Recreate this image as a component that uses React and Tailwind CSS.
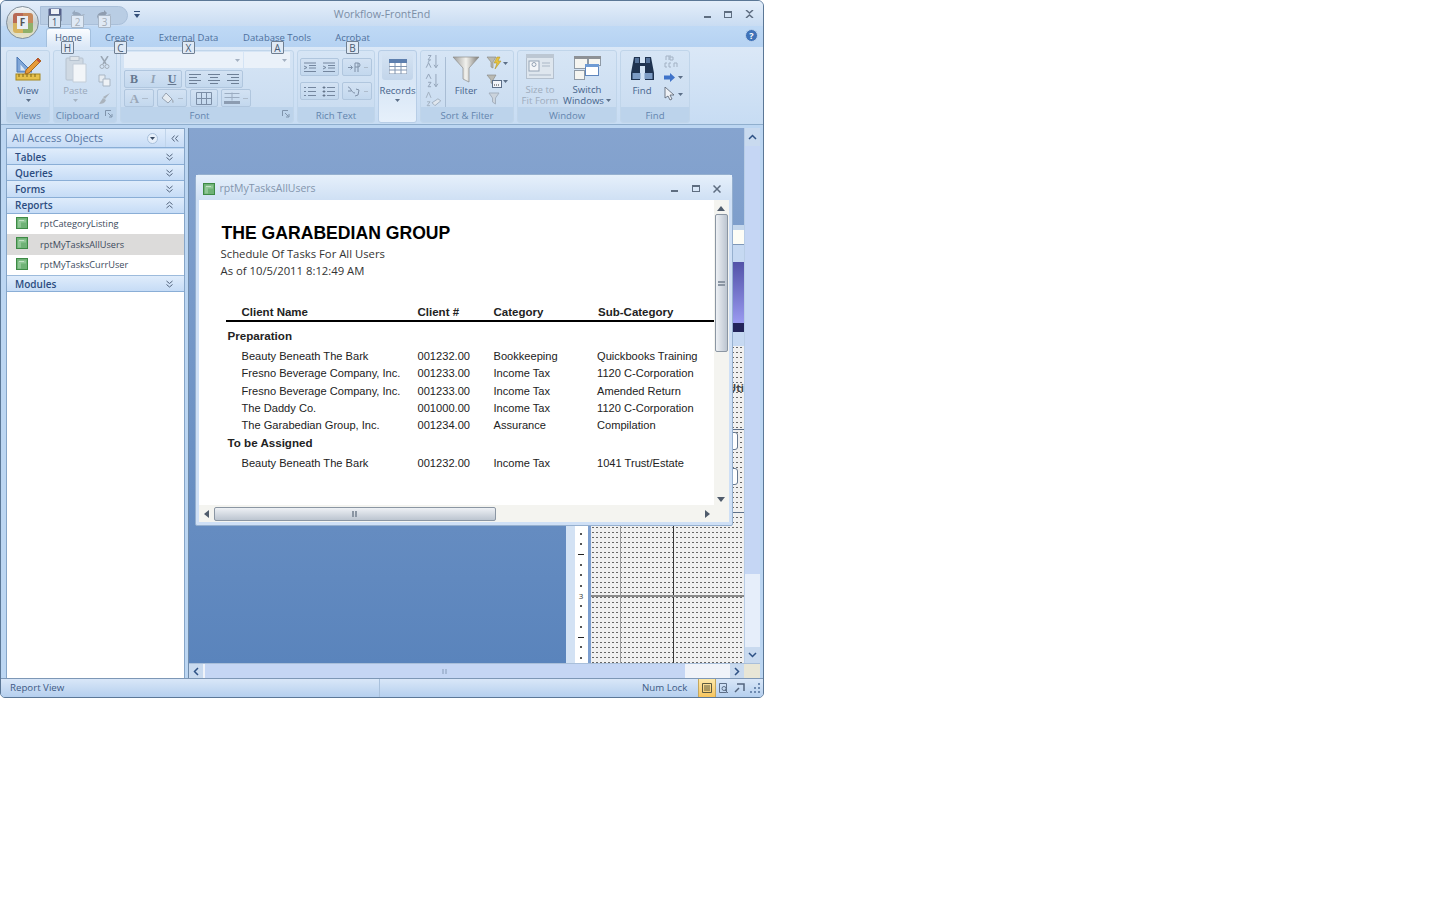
import React from "react";

const Caret = ({ c = "#5c6f88" }) => (
  <svg width="5" height="3" viewBox="0 0 5 3" className="shrink-0"><path d="M0 0h5L2.5 3z" fill={c} /></svg>
);

const KeyTip = ({ x, y, t, dim }) => (
  <div className={`absolute z-20 w-[13px] h-[13px] flex items-center justify-center rounded-[1px] border text-[10px] leading-none bg-[#dfe9f5] ${dim ? "border-[#a9b7c7] text-[#a4adb8]" : "border-[#6f7f92] text-[#4a5b72]"}`} style={{ left: x, top: y }}>{t}</div>
);

const Group = ({ w, label, launcher, children }) => (
  <div className="shrink-0 h-[73px] flex flex-col rounded-[3px] border border-[#c0d5ea] bg-gradient-to-b from-[#d6e5f5] to-[#c8dbf0] overflow-hidden" style={{ width: w }}>
    <div className="flex-1 flex min-h-0">{children}</div>
    <div className={`h-[15px] relative flex items-center justify-center bg-[#bcd3eb] text-[9.600px] text-[#6385ae] leading-none pt-[2px] ${launcher ? "pr-[15px]" : ""}`}>
      {label}
      {launcher && (
        <svg width="8" height="8" viewBox="0 0 8 8" className="absolute right-[3px] top-[3px]"><path d="M.5 6V.5H6M3 3l3.5 3.5M7 4v3H4" fill="none" stroke="#7f93ab" /></svg>
      )}
    </div>
  </div>
);

const Seg = ({ w, children }) => (
  <div className="h-[18px] flex items-center justify-center gap-[3px] rounded-[2px] border border-[#b0c6de] bg-gradient-to-b from-[#d3e2f3] to-[#c3d8ee]" style={{ width: w }}>{children}</div>
);

const ReportIcon = ({ size = 12 }) => (
  <svg width={size} height={size} viewBox="0 0 12 12" className="shrink-0">
    <rect width="12" height="12" fill="#3d8a45" />
    <rect x="1" y="1" width="10" height="10" fill="#6fb276" />
    <path d="M3 2.5h7v3H5v5H2v-7z" fill="#8fc795" />
    <rect x="3" y="3" width="5" height="1" fill="#c3e2c6" />
  </svg>
);

const NavHead = ({ t, up }) => (
  <div className="h-[16.200px] shrink-0 flex items-center justify-between pl-[8px] pr-[11px] border-b border-[#8aaed6] bg-gradient-to-b from-[#dfecfb] to-[#c6dcf6] text-[10px] font-semibold text-[#2b4c80] leading-none">
    <span>{t}</span>
    <svg width="7" height="8" viewBox="0 0 7 8" fill="none" stroke="#52637c" strokeWidth="1">
      {up ? <path d="M.5 3.5L3.5 1l3 2.5M.5 7L3.5 4.5l3 2.5" /> : <path d="M.5 1l3 2.5L6.500 1M.5 4.500L3.500 7l3-2.500" />}
    </svg>
  </div>
);

const NavItem = ({ t, sel }) => (
  <div className={`h-[20.500px] shrink-0 flex items-center pl-[9px] text-[9.200px] text-[#3c4a5c] ${sel ? "bg-[#dcdbda]" : ""}`}>
    <div className="mb-[3px]"><ReportIcon /></div>
    <span className="ml-[12px]">{t}</span>
  </div>
);

const rows = [
  ["Beauty Beneath The Bark", "001232.00", "Bookkeeping", "Quickbooks Training"],
  ["Fresno Beverage Company, Inc.", "001233.00", "Income Tax", "1120 C-Corporation"],
  ["Fresno Beverage Company, Inc.", "001233.00", "Income Tax", "Amended Return"],
  ["The Daddy Co.", "001000.00", "Income Tax", "1120 C-Corporation"],
  ["The Garabedian Group, Inc.", "001234.00", "Assurance", "Compilation"],
];

const Row = ({ r, cls }) => (
  <div className={`flex text-[11.100px] leading-none text-[#222] pl-[43px] ${cls}`}>
    <span className="w-[176px] whitespace-nowrap">{r[0]}</span>
    <span className="w-[76px]">{r[1]}</span>
    <span className="w-[103.500px]">{r[2]}</span>
    <span className="whitespace-nowrap">{r[3]}</span>
  </div>
);

const Dotted = "bg-[radial-gradient(#666_0.6px,transparent_0.8px)] bg-[length:4px_5px] bg-[#f0f0f0]";

const ticks = ["d", "d", "l", "d", "d", "d", "3", "d", "d", "d", "l", "d", "d"];

export default function App() {
  return (
    <div className="w-full h-[913px] bg-white font-['Open_Sans','Noto_Sans',sans-serif]">
      <div className="relative w-[764px] h-[698px] flex flex-col rounded-t-[6px] rounded-b-[5px] border border-[#5b7796] overflow-hidden bg-[#bcd6f2]">
        {/* Title bar */}
        <div className="h-[25px] shrink-0 relative flex items-center justify-center pt-[1px] bg-gradient-to-b from-[#e4eefa] to-[#c9dcf2] text-[10.700px] text-[#7b8ea6]">
          Workflow-FrontEnd
          <div className="absolute right-[9px] top-[9px] flex items-center gap-[13px]">
            <div className="w-[7px] h-[2px] bg-[#5e6d80] mt-[5px]" />
            <div className="w-[8px] h-[7px] border border-[#5e6d80] border-t-2" />
            <svg width="9" height="8" viewBox="0 0 9 8"><path d="M1 0l3.500 3L8 0M1 8l3.500-3L8 8" fill="none" stroke="#5e6d80" strokeWidth="1.500" /></svg>
          </div>
        </div>

        {/* Office button + QAT (over the title bar) */}
        <div className="absolute left-[39px] top-[5px] w-[88px] h-[19px] rounded-r-full bg-[#b9cde4] border border-[#a9bfd9]" />
        <div className="absolute left-[5px] top-[5px] z-10 w-[33px] h-[33px] rounded-full border border-[#7f8d99] bg-gradient-to-b from-[#f3f5f6] via-[#c9cfcf] to-[#e8e4c4] flex items-center justify-center">
          <div className="w-[20px] h-[20px] rounded-[3px] bg-[conic-gradient(#c7895a_0_25%,#8fb06a_25%_50%,#d6b35f_50%_75%,#b86a55_75%)] flex items-center justify-center">
            <div className="w-[11px] h-[13px] bg-[#e9eef2] text-[10px] leading-[13px] font-bold text-center text-[#555]">F</div>
          </div>
        </div>
        <svg className="absolute left-[47px] top-[7px] z-10" width="14" height="14" viewBox="0 0 14 14"><rect x="0.500" y="0.500" width="13" height="13" rx="1" fill="#55608a" /><rect x="3" y="1" width="8" height="5" fill="#eef1f6" /><rect x="4" y="9" width="6" height="5" fill="#c7ccd6" /></svg>
        <svg className="absolute left-[69px] top-[8px] z-10" width="16" height="12" viewBox="0 0 16 12"><path d="M2 4l3-3v2c5 0 7 2 7 7-1-3-3-4-7-4v2z" fill="#97a8bd" /><path d="M12 5h3l-1.500 2z" fill="#a8b8ca" /></svg>
        <svg className="absolute left-[95px] top-[8px] z-10" width="16" height="12" viewBox="0 0 16 12"><path d="M11 4L8 1v2C3 3 1 5 1 10c1-3 3-4 7-4v2z" fill="#8f9db0" /><path d="M12 5h3l-1.500 2z" fill="#a8b8ca" /></svg>
        <svg className="absolute left-[133px] top-[10px] z-10" width="6" height="7" viewBox="0 0 6 7"><path d="M0 0h6v1H0zM0 3h6L3 7z" fill="#35507a" /></svg>
        <KeyTip x={47} y={14} t="1" />
        <KeyTip x={70} y={14} t="2" dim />
        <KeyTip x={97} y={14} t="3" dim />

        {/* Tabs */}
        <div className="h-[21px] shrink-0 relative flex pl-[45px] pt-[2px] bg-gradient-to-b from-[#bfd9f5] to-[#b5d2f2] text-[9.500px] text-[#4d6f9c] leading-none">
          <div className="w-[45px] rounded-t-[3px] bg-gradient-to-b from-[#fafcff] to-[#dbe8f7] border border-b-0 border-[#a4c0de] flex items-center justify-center text-[#3f5a80]">Home</div>
          <div className="w-[57px] flex items-center justify-center">Create</div>
          <div className="w-[81px] flex items-center justify-center">External Data</div>
          <div className="w-[96px] flex items-center justify-center">Database Tools</div>
          <div className="w-[55px] flex items-center justify-center">Acrobat</div>
          <div className="absolute right-[5px] top-[3px] w-[13px] h-[13px] rounded-full bg-[#3f72b8] border border-[#bcd3ee] flex items-center justify-center text-white text-[9px] font-bold leading-none">?</div>
        </div>
        <KeyTip x={60} y={40} t="H" />
        <KeyTip x={113} y={40} t="C" />
        <KeyTip x={181} y={40} t="X" />
        <KeyTip x={270} y={40} t="A" />
        <KeyTip x={345} y={40} t="B" />

        {/* Ribbon */}
        <div className="h-[78px] shrink-0 flex gap-[3px] pl-[5px] pt-[3px] bg-gradient-to-b from-[#dbe8f7] to-[#c7dcf3] border-b border-[#8faecd] text-[9.600px] leading-[11px] text-[#47648c]">
          <Group w={44} label="Views">
            <div className="w-full flex flex-col items-center pt-[4px]">
              <svg width="28" height="27" viewBox="0 0 28 27">
                <path d="M3 2l15 15H3z" fill="#7fa6d8" stroke="#4a77b3" />
                <path d="M6.500 9.500l5 6h-5z" fill="#dbe8f7" />
                <rect x="2" y="19" width="24" height="6" fill="#e6c14c" stroke="#a58721" />
                <path d="M5 19v3M9 19v3M13 19v3M17 19v3M21 19v3" stroke="#7d6517" />
                <path d="M12 15L24 3l3 3-12 12-4 1z" fill="#e69b3a" stroke="#a86a1e" />
                <path d="M23 4l3 3" stroke="#c04a3a" strokeWidth="2" />
              </svg>
              <span className="mt-[3px]">View</span>
              <div className="mt-[3px]"><Caret /></div>
            </div>
          </Group>
          <Group w={64} label="Clipboard" launcher>
            <div className="w-[43px] flex flex-col items-center pt-[5px] text-[#9aa9bb]">
              <svg width="24" height="27" viewBox="0 0 24 27"><rect x="2" y="2" width="17" height="22" rx="1" fill="#cfd9e3" stroke="#b6c2cf" /><rect x="6" y="0.500" width="9" height="4" fill="#dfe5ea" stroke="#b6c2cf" /><path d="M9 8h13v18H9z" fill="#f2f5f8" stroke="#c3cdd8" /></svg>
              <span className="mt-[2px]">Paste</span>
              <div className="mt-[3px]"><Caret c="#a6b3c2" /></div>
            </div>
            <div className="flex flex-col items-center pt-[5px] gap-[5px] w-[14px]">
              <svg width="11" height="13" viewBox="0 0 11 13"><path d="M2 0l5 8M9 0L4 8" stroke="#9ba7b4" strokeWidth="1.500" /><circle cx="3" cy="10.500" r="2" fill="none" stroke="#a5afba" /><circle cx="8" cy="10.500" r="2" fill="none" stroke="#a5afba" /></svg>
              <svg width="13" height="13" viewBox="0 0 13 13"><path d="M1 1h6v7H1z" fill="#e6ecf2" stroke="#a9b6c4" /><path d="M5 5h7v7H5z" fill="#eef2f6" stroke="#a9b6c4" /></svg>
              <svg width="13" height="13" viewBox="0 0 13 13"><path d="M12 1L7 7 5 5zM5 6L1 12c3 0 6-1 7-4z" fill="#aab3bd" /></svg>
            </div>
          </Group>
          <Group w={174} label="Font" launcher>
            <div className="flex flex-col pl-[3px] pt-[1px]">
              <div className="flex gap-[1px] h-[18px]">
                <div className="w-[119px] bg-[#eaf1f9] flex items-center justify-end pr-[3px]"><Caret c="#a4b1c1" /></div>
                <div className="w-[46px] bg-[#eaf1f9] flex items-center justify-end pr-[3px]"><Caret c="#a4b1c1" /></div>
              </div>
              <div className="flex gap-[3px] mt-[2px]">
                <Seg w={58}>
                  <span className="w-[16px] text-center font-['Liberation_Serif',serif] font-bold text-[12px] text-[#65778f]">B</span>
                  <span className="w-[16px] text-center font-['Liberation_Serif',serif] italic font-bold text-[12px] text-[#93a2b4]">I</span>
                  <span className="w-[16px] text-center font-['Liberation_Serif',serif] font-bold text-[12px] underline text-[#65778f]">U</span>
                </Seg>
                <Seg w={58}>
                  {[0, 1, 2].map((k) => (
                    <svg key={k} width="14" height="10" viewBox="0 0 14 10" className="mx-[1px]" stroke="#6d7f96">
                      {k === 0 && <path d="M1 .5h12M1 3.500h8M1 6.500h12M1 9.500h8" />}
                      {k === 1 && <path d="M1 .5h12M3 3.500h8M1 6.500h12M3 9.500h8" />}
                      {k === 2 && <path d="M1 .5h12M5 3.500h8M1 6.500h12M5 9.500h8" />}
                    </svg>
                  ))}
                </Seg>
              </div>
              <div className="flex gap-[3px] mt-[1px]">
                <Seg w={30}><span className="font-['Liberation_Serif',serif] font-bold text-[13px] text-[#9aa7b7]">A</span><div className="w-[6px] h-[1px] bg-[#aebccc]" /></Seg>
                <Seg w={30}>
                  <svg width="14" height="13" viewBox="0 0 14 13"><path d="M5 1l6 6-4 4-6-5z" fill="#e5ebf1" stroke="#98a4b3" /><path d="M11 7c2 1 2 4 1 4s-1-2-1-4z" fill="#a5b0bd" /></svg>
                  <div className="w-[5px] h-[1px] bg-[#aebccc]" />
                </Seg>
                <Seg w={28}>
                  <svg width="16" height="13" viewBox="0 0 16 13" fill="none" stroke="#7c8ea6"><path d="M.5.5h15v12H.5zM.5 6.500h15M5.500.5v12M10.500.5v12" /></svg>
                </Seg>
                <Seg w={30}>
                  <svg width="16" height="13" viewBox="0 0 16 13"><path d="M.5 1.500h15M.5 5.500h15M8 .5v8" stroke="#9bacc1" /><rect y="9" width="16" height="3" fill="#8c9cb1" /></svg>
                  <div className="w-[5px] h-[1px] bg-[#aebccc]" />
                </Seg>
              </div>
            </div>
          </Group>
          <Group w={78} label="Rich Text">
            <div className="flex flex-col gap-[6px] pl-[2px] pt-[7px]">
              {[0, 1].map((r) => (
                <div key={r} className="flex gap-[3px]">
                  <Seg w={39}>
                    {[0, 1].map((k) => (
                      <svg key={k} width="14" height="11" viewBox="0 0 14 11" className="mx-[1px]" stroke="#74869e">
                        {r === 0 ? <path d="M1 1h12M6 3.500h7M6 6h7M1 9.500h12M1 4l3 1.500L1 7" fill="none" /> : k === 0 ? <path d="M5 1.500h8M5 5.500h8M5 9.500h8M1 1.500h2M1 5.500h2M1 9.500h2" /> : <path d="M5 1.500h8M5 5.500h8M5 9.500h8M1 1h2v1H1zM1 5h2v1H1zM1 9h2v1H1z" />}
                      </svg>
                    ))}
                  </Seg>
                  <Seg w={30}>
                    <svg width="14" height="11" viewBox="0 0 14 11" stroke="#7f90a7" fill="none">
                      {r === 0 ? <path d="M1 5.500h4M3.500 3.500l2 2-2 2M8 1v9M11 1v9M8 1h3a2 2 0 0 1 0 4H8" /> : <path d="M1 1c3 0 3 6 7 6M1 5h3M9 3l3 1-1 5-3 1" />}
                    </svg>
                    <div className="w-[4px] h-[1px] bg-[#aebccc]" />
                  </Seg>
                </div>
              ))}
            </div>
          </Group>
          <div className="shrink-0 w-[39px] h-[73px] rounded-[3px] border border-[#b7cde6] bg-gradient-to-b from-[#d4e3f4] via-[#d9e7f6] to-[#e6f0fb] flex flex-col items-center pt-[2px]">
            <div className="w-[31px] h-[27px] rounded-[3px] bg-gradient-to-b from-[#d5e3f3] to-[#c2d5ea] flex items-center justify-center">
              <svg width="18" height="15" viewBox="0 0 18 15"><rect width="18" height="15" fill="#fff" stroke="#7c8ea6" /><rect width="18" height="4" fill="#5d7fae" /><path d="M0 7.500h18M0 11h18M6 4v11M12 4v11" stroke="#7f94b1" /></svg>
            </div>
            <span className="mt-[5px]">Records</span>
            <div className="mt-[3px]"><Caret /></div>
          </div>
          <Group w={94} label="Sort & Filter">
            <div className="w-[24px] flex flex-col items-center pt-[3px] gap-[3px] text-[#9eacbd]">
              <svg width="16" height="16" viewBox="0 0 16 16" fill="none" stroke="#93a4b8"><path d="M3 1.500h3L3 6h3M3 9l1.500-3M1 14l2.500-5L6 14M11 1v13M9 11l2 3 2-3" /></svg>
              <svg width="16" height="16" viewBox="0 0 16 16" fill="none" stroke="#93a4b8"><path d="M1 6l2.500-5L6 6M3 9.500h3L3 14h3M11 1v13M9 11l2 3 2-3" /></svg>
              <svg width="18" height="16" viewBox="0 0 18 16" fill="none" stroke="#a3b1c2"><path d="M2 7l2.500-6L7 7M3 11h3l-3 4h3" /><path d="M8 12l6-4 3 2-6 5z" fill="#dfe6ee" /></svg>
            </div>
            <div className="w-[1px] h-[50px] mt-[6px] bg-[#a9bdd4]" />
            <div className="w-[40px] flex flex-col items-center pt-[5px]">
              <svg width="28" height="27" viewBox="0 0 28 27"><defs><linearGradient id="fn" x1="0" x2="1"><stop offset="0" stopColor="#9a9a98" /><stop offset=".5" stopColor="#f2f2ee" /><stop offset="1" stopColor="#7c7a76" /></linearGradient></defs><path d="M1 1h26L17 12v14l-6-3V12z" fill="url(#fn)" stroke="#8d8d8a" strokeWidth=".7" /></svg>
              <span className="mt-[2px] text-[#47648c]">Filter</span>
            </div>
            <div className="flex flex-col items-start pt-[4px] gap-[2px]">
              <div className="flex items-center gap-[1px]"><svg width="16" height="16" viewBox="0 0 16 16"><path d="M1 2h9L7 7v6l-2-1V7z" fill="#b9b9b2" stroke="#85857f" strokeWidth=".6" /><path d="M11 2L8 8h3l-2 6 6-8h-3l2-4z" fill="#e6c33f" stroke="#a88a1c" strokeWidth=".5" /></svg><Caret /></div>
              <div className="flex items-center gap-[1px]"><svg width="16" height="16" viewBox="0 0 16 16"><path d="M1 2h9L7 7v4l-2-1V7z" fill="#b9b9b2" stroke="#85857f" strokeWidth=".6" /><rect x="6.500" y="7.500" width="9" height="7" fill="#f2f5fa" stroke="#5c6f88" /><path d="M8 12h1M10 12h1M12 12h1" stroke="#333" /></svg><Caret /></div>
              <svg width="12" height="13" viewBox="0 0 12 13" className="ml-[2px] mt-[1px]"><path d="M1 1h10L7.500 6v6l-3-2V6z" fill="#cbd3dc" stroke="#a5b1bf" /></svg>
            </div>
          </Group>
          <Group w={100} label="Window">
            <div className="w-[44px] flex flex-col items-center pt-[3px] text-[#9eacbd]">
              <svg width="28" height="27" viewBox="0 0 28 27"><rect x="0.500" y="0.500" width="27" height="24" fill="#dee6ee" stroke="#b4c0ce" /><rect x="0" y="0" width="28" height="4" fill="#bcc7d3" /><rect x="3" y="7" width="10" height="10" fill="#f3f6f9" stroke="#94a3b5" /><circle cx="8" cy="10.500" r="2" fill="none" stroke="#94a3b5" /><path d="M16 9h8M16 12h8M3 21h22" stroke="#aab7c6" /></svg>
              <span className="mt-[3px] whitespace-nowrap">Size to</span>
              <span className="whitespace-nowrap">Fit Form</span>
            </div>
            <div className="w-[50px] flex flex-col items-center pt-[5px]">
              <svg width="27" height="24" viewBox="0 0 27 24"><rect x="0.500" y="0.500" width="13" height="12" fill="#f5f5f1" stroke="#8f9aa6" /><rect x="14.500" y="0.500" width="12" height="9" fill="#f5f5f1" stroke="#8f9aa6" /><rect x="0" y="0" width="14" height="3" fill="#8d9196" /><rect x="14" y="0" width="13" height="3" fill="#8d9196" /><rect x="0.500" y="14.500" width="10" height="9" fill="#f5f5f1" stroke="#8f9aa6" /><rect x="11.500" y="8.500" width="13" height="11" fill="#fff" stroke="#5f86bd" /><rect x="11" y="8" width="14" height="3" fill="#6f9bd4" /></svg>
              <span className="mt-[4px] whitespace-nowrap">Switch</span>
              <span className="whitespace-nowrap flex items-center gap-[2px]">Windows <Caret /></span>
            </div>
          </Group>
          <Group w={70} label="Find">
            <div className="w-[42px] flex flex-col items-center pt-[4px]">
              <svg width="27" height="27" viewBox="0 0 27 27"><path d="M5 2h6v6h5V2h6l3 16v7h-9V11h-5v14H2v-7z" fill="#1f3350" /><rect x="3.500" y="18" width="8" height="6" fill="#7d9cc4" /><rect x="15.500" y="18" width="8" height="6" fill="#7d9cc4" /><rect x="6" y="3" width="4" height="5" fill="#55729a" /><rect x="17" y="3" width="4" height="5" fill="#55729a" /></svg>
              <span className="mt-[3px]">Find</span>
            </div>
            <div className="flex flex-col pt-[3px] gap-[3px] pl-[1px]">
              <svg width="14" height="15" viewBox="0 0 14 15" fill="none" stroke="#a3b2c4"><path d="M2 6V2h3v4M6 1v5h3v-3H6M3 9h-2v4h2M7 9H5v4h2M10 13V9h3v4" /></svg>
              <div className="flex items-center gap-[3px]"><svg width="11" height="11" viewBox="0 0 11 11"><path d="M0 3.500h6V1l5 4.500L6 10V7.500H0z" fill="#3f73c9" /></svg><Caret /></div>
              <div className="flex items-center gap-[3px] mt-[1px]"><svg width="11" height="14" viewBox="0 0 11 14"><path d="M1 0v11l3-2 2 4 2-1-2-4h4z" fill="#eef1f5" stroke="#55606e" strokeWidth=".8" /></svg><Caret /></div>
            </div>
          </Group>
        </div>

        {/* Main */}
        <div className="flex-1 min-h-0 flex bg-[#bcd6f2]">
          {/* Navigation pane */}
          <div className="w-[179px] ml-[5px] mt-[3px] flex flex-col bg-white border border-[#86a5c7] border-b-0 text-[#2b4c80]">
            <div className="h-[19px] shrink-0 flex items-center pl-[5px] bg-gradient-to-b from-[#e1edfb] to-[#c7dcf6] text-[11px] text-[#5878a6] border-b border-[#8aaed6]">
              <span className="flex-1">All Access Objects</span>
              <div className="w-[11px] h-[11px] rounded-full bg-[#e6effa] border border-[#a9c1dc] flex items-center justify-center mr-[7px]"><Caret c="#394b63" /></div>
              <div className="w-[1px] h-[18px] bg-[#c0d4ea]" />
              <svg width="8" height="7" viewBox="0 0 8 7" fill="none" stroke="#53647d" className="mx-[5px]"><path d="M3.500.5L1 3.500l2.500 3M7 .5L4.500 3.500 7 6.500" /></svg>
            </div>
            <div className="h-[1px] shrink-0 bg-[#c0d7f1]" />
            <NavHead t="Tables" />
            <NavHead t="Queries" />
            <NavHead t="Forms" />
            <NavHead t="Reports" up />
            <NavItem t="rptCategoryListing" />
            <NavItem t="rptMyTasksAllUsers" sel />
            <NavItem t="rptMyTasksCurrUser" />
            <div className="h-[1px] shrink-0 bg-[#9dbbdc]" />
            <NavHead t="Modules" />
          </div>

          {/* MDI area */}
          <div className="w-[574px] ml-[3px] mt-[3px] mr-[3px] flex flex-col min-w-0 border-l border-[#6f8bab]">
            <div className="flex-1 min-h-0 flex">
              <div className="relative flex-1 min-w-0 bg-gradient-to-b from-[#86a4cf] to-[#5a84bc] overflow-hidden">
                {/* Design window behind */}
                <div className="absolute left-[377px] top-[97px] right-0 bottom-0 flex bg-[#d3e2f4] border-l-[9px] border-[#d3e2f4]">
                  <div className="w-[13px] bg-white flex flex-col items-center pt-[304px] text-[8px] leading-none text-[#333]">
                    {ticks.map((k, i) => (
                      <div key={i} className="h-[10.300px] flex items-center justify-center">
                        {k === "d" && <div className="w-[2px] h-[2px] bg-[#555]" />}
                        {k === "l" && <div className="w-[6px] h-[1px] bg-[#222]" />}
                        {k === "3" && <span>3</span>}
                      </div>
                    ))}
                  </div>
                  <div className="w-[3px] bg-[#7d9fd0]" />
                  <div className={`relative flex-1 flex flex-col ${Dotted}`}>
                    <div className="h-[5px] bg-[#c5d7ec]" />
                    <div className="h-[15px] bg-[#fdfdf6] relative border-b border-[#7f98b8]" />
                    <div className="h-[17px] bg-[#c6d9f2]" />
                    <div className="h-[61px] bg-gradient-to-b from-[#5353a8] to-[#9a9af0]" />
                    <div className="h-[9px] bg-[#23245a]" />
                    <div className="h-[14px] bg-[#c6d9f2]" />
                    <div className="absolute right-0 top-[158px] text-[10.500px] font-bold text-[#444] leading-none whitespace-nowrap">Uti</div>
                    <div className="absolute right-[6px] top-[207px] w-[14px] h-[18px] rounded-[3px] border border-[#66788f] bg-white" />
                    <div className="absolute right-[6px] top-[243px] w-[14px] h-[17px] rounded-[3px] border border-[#66788f] bg-white" />
                    <div className="absolute right-0 w-[30px] top-[204px] h-[1px] bg-[#5d6f88]" />
                    <div className="absolute right-0 w-[30px] top-[287px] h-[1px] bg-[#5d6f88]" />
                    <div className="absolute left-[29px] top-[300px] bottom-0 w-[1px] bg-[#9a9a9a]" />
                    <div className="absolute left-[82px] top-[300px] bottom-0 w-[1px] bg-[#333]" />
                    <div className="absolute left-0 right-0 top-[370px] h-[2px] bg-[#8a8a8a]" />
                  </div>
                </div>

                {/* Report window */}
                <div className="absolute left-[6px] top-[46px] w-[538px] h-[352px] flex flex-col rounded-t-[5px] rounded-b-[2px] border border-[#96b0cf] bg-[#cfe0f6]">
                  <div className="h-[25px] shrink-0 flex items-center pl-[7px] pr-[11px] pt-[2px] bg-gradient-to-b from-[#e6f0fb] to-[#cfe0f4] text-[10.500px] text-[#8395ad]">
                    <ReportIcon />
                    <span className="ml-[5px] flex-1">rptMyTasksAllUsers</span>
                    <div className="w-[7px] h-[2px] bg-[#5e6d80] mt-[4px] mr-[14px]" />
                    <div className="w-[8px] h-[7px] border border-[#5e6d80] border-t-2 mr-[13px]" />
                    <svg width="8" height="8" viewBox="0 0 8 8"><path d="M.5.5l7 7M7.500.5l-7 7" stroke="#5e6d80" strokeWidth="1.500" /></svg>
                  </div>
                  <div className="flex-1 min-h-0 flex flex-col mx-[3px] mb-[3px] bg-white">
                    <div className="flex-1 min-h-0 flex">
                      <div className="flex-1 min-w-0 font-['Liberation_Sans',Arial,sans-serif] pt-[23px] overflow-hidden">
                        <div className="pl-[23px] text-[17.600px] font-bold leading-[20px] text-black">THE GARABEDIAN GROUP</div>
                        <div className="pl-[22px] mt-[3px] font-['Open_Sans',sans-serif] text-[11.300px] leading-[15px] text-[#333]">Schedule Of Tasks For All Users</div>
                        <div className="pl-[22px] mt-[2px] font-['Open_Sans',sans-serif] text-[11.300px] leading-[15px] text-[#333]">As of 10/5/2011 8:12:49 AM</div>
                        <div className="flex pl-[43px] mt-[29px] text-[11.500px] font-bold leading-none text-[#222]">
                          <span className="w-[176px]">Client Name</span>
                          <span className="w-[76px]">Client #</span>
                          <span className="w-[104.500px]">Category</span>
                          <span>Sub-Category</span>
                        </div>
                        <div className="ml-[27px] mt-[1px] h-[2px] bg-black" />
                        <div className="pl-[29px] mt-[8px] text-[11.600px] font-bold leading-none text-[#222]">Preparation</div>
                        <Row r={rows[0]} cls="mt-[10px]" />
                        {rows.slice(1).map((r) => <Row key={r[0] + r[3]} r={r} cls="mt-[6.200px]" />)}
                        <div className="pl-[29px] mt-[5.500px] text-[11.600px] font-bold leading-none text-[#222]">To be Assigned</div>
                        <Row r={["Beauty Beneath The Bark", "001232.00", "Income Tax", "1041 Trust/Estate"]} cls="mt-[10px]" />
                      </div>
                      <div className="w-[15px] shrink-0 flex flex-col items-center bg-[#f4f4f0]">
                        <svg width="8" height="5" viewBox="0 0 8 5" className="mt-[6px] mb-[3px]"><path d="M0 5h8L4 0z" fill="#4f5b6b" /></svg>
                        <div className="w-[13px] h-[138px] rounded-[2px] border border-[#8b96a3] bg-gradient-to-r from-[#eef1f5] to-[#bcc5d0] flex items-center justify-center">
                          <div className="w-[7px] h-[5px] border-y-2 border-[#8b96a3]" />
                        </div>
                        <div className="flex-1" />
                        <svg width="8" height="5" viewBox="0 0 8 5" className="mb-[3px]"><path d="M0 0h8L4 5z" fill="#4f5b6b" /></svg>
                      </div>
                    </div>
                    <div className="h-[17px] shrink-0 flex items-center bg-[#f4f4f0] pr-[19px]">
                      <svg width="5" height="8" viewBox="0 0 5 8" className="ml-[5px] mr-[5px]"><path d="M5 0v8L0 4z" fill="#4f5b6b" /></svg>
                      <div className="w-[282px] h-[14px] rounded-[2px] border border-[#8b96a3] bg-gradient-to-b from-[#eef1f5] to-[#bcc5d0] flex items-center justify-center">
                        <div className="w-[5px] h-[6px] border-x-2 border-[#8b96a3]" />
                      </div>
                      <div className="flex-1" />
                      <svg width="5" height="8" viewBox="0 0 5 8"><path d="M0 0v8l5-4z" fill="#4f5b6b" /></svg>
                    </div>
                  </div>
                </div>
              </div>

              {/* MDI vertical scrollbar */}
              <div className="w-[16px] shrink-0 flex flex-col bg-[#e6eefa] border-l border-[#b9cde6]">
                <div className="h-[18px] bg-[#c9daef] flex items-center justify-center"><svg width="9" height="6" viewBox="0 0 9 6" fill="none" stroke="#2f5285" strokeWidth="1.500"><path d="M1 5l3.500-3.500L8 5" /></svg></div>
                <div className="h-[428px] bg-[#c5d6f4]" />
                <div className="flex-1" />
                <div className="h-[16px] bg-[#c9daef] flex items-center justify-center"><svg width="9" height="6" viewBox="0 0 9 6" fill="none" stroke="#2f5285" strokeWidth="1.500"><path d="M1 1l3.500 3.500L8 1" /></svg></div>
              </div>
            </div>
            {/* MDI horizontal scrollbar */}
            <div className="h-[15px] shrink-0 flex items-stretch bg-[#f0f3f9] border-t border-[#a9bfda]">
              <div className="w-[14px] bg-[#c9daef] flex items-center justify-center"><svg width="6" height="9" viewBox="0 0 6 9" fill="none" stroke="#2f5285" strokeWidth="1.500"><path d="M5 1L1.500 4.500 5 8" /></svg></div>
              <div className="w-[480px] ml-[2px] bg-[#c5d6f4] flex items-center justify-center"><div className="w-[5px] h-[5px] border-x-2 border-[#a6b9d6]" /></div>
              <div className="flex-1" />
              <div className="w-[14px] bg-[#c9daef] flex items-center justify-center"><svg width="6" height="9" viewBox="0 0 6 9" fill="none" stroke="#2f5285" strokeWidth="1.500"><path d="M1 1l3.500 3.500L1 8" /></svg></div>
              <div className="w-[16px] bg-[#e8e6d6]" />
            </div>
          </div>
        </div>

        {/* Status bar */}
        <div className="h-[19px] shrink-0 flex items-center bg-gradient-to-b from-[#d9e7f8] to-[#b5cfee] border-t border-[#7d97b6] text-[9.700px] leading-none text-[#3d5a86]">
          <span className="pl-[9px] w-[379px] h-full flex items-center border-r border-[#a9c1dc]">Report View</span>
          <span className="ml-[262px]">Num Lock</span>
          <div className="ml-[11px] h-full flex">
            <div className="w-[18px] bg-gradient-to-b from-[#fde9a9] to-[#f6c45c] border-x border-[#c5a75c] flex items-center justify-center">
              <svg width="10" height="10" viewBox="0 0 10 10" fill="none" stroke="#5c5a3f"><path d="M.5.5h9v9h-9zM2 3h6M2 5h6M2 7h6" /></svg>
            </div>
            <div className="w-[16px] flex items-center justify-center">
              <svg width="10" height="10" viewBox="0 0 10 10" fill="none" stroke="#5d6f88"><path d="M.5.5h7v9h-7zM6 7l3 3" /><circle cx="5" cy="5.500" r="2" /></svg>
            </div>
            <div className="w-[14px] flex items-center justify-center">
              <svg width="11" height="10" viewBox="0 0 11 10" fill="none" stroke="#53647d" strokeWidth="1.500"><path d="M1 9l4-4M3 1h7v7" /></svg>
            </div>
          </div>
          <svg width="10" height="10" viewBox="0 0 10 10" className="ml-[4px]" fill="#6e8ab0"><rect x="8" y="8" width="2" height="2" /><rect x="4" y="8" width="2" height="2" /><rect x="0" y="8" width="2" height="2" /><rect x="8" y="4" width="2" height="2" /><rect x="4" y="4" width="2" height="2" /><rect x="8" y="0" width="2" height="2" /></svg>
        </div>
      </div>
    </div>
  );
}
